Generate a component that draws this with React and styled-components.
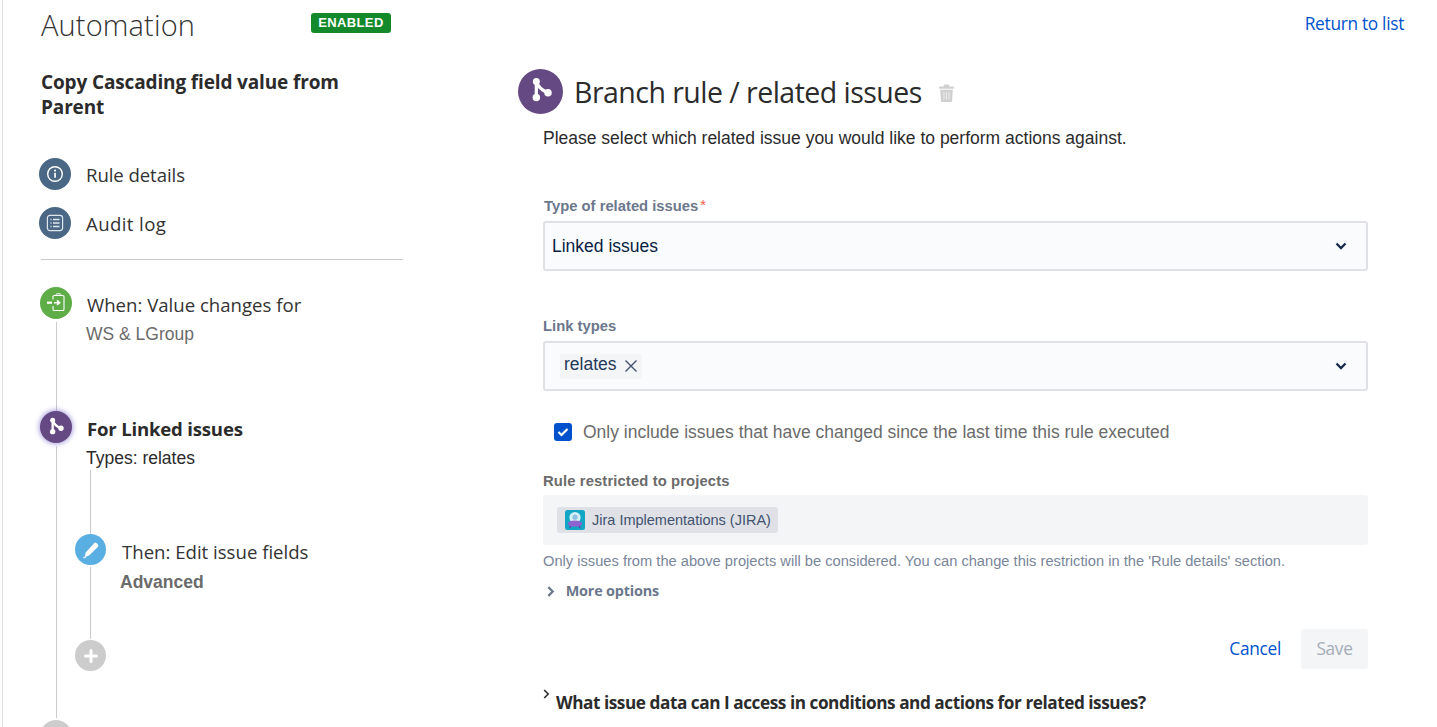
import React from "react";
import styled, { createGlobalStyle } from "styled-components";

const Global = createGlobalStyle`
  html, body { margin: 0; padding: 0; background: #fff; height: 727px; overflow: hidden; }
  * { box-sizing: border-box; }
  body { font-family: "Liberation Sans", Arial, sans-serif; color: #172b4d; }
`;
const SEGOE = `"Open Sans", "Noto Sans", sans-serif`;

const Page = styled.div`display:flex;height:727px;overflow:hidden;padding-left:2px;`;
const Sidebar = styled.aside`
  width:516px;flex:none;border-left:1px solid #dfe1e6;padding:0 0 0 38px;display:flex;flex-direction:column;
`;
const SideInner = styled.div`width:362px;display:flex;flex-direction:column;`;
const SideHead = styled.div`display:flex;justify-content:space-between;align-items:flex-start;padding-right:12px;height:62px;`;
const AppTitle = styled.h1`margin:5px 0 0;font:300 29px/40px ${SEGOE};letter-spacing:.15px;color:#333;`;
const Lozenge = styled.span`
  margin-top:13px;width:80px;height:20px;border-radius:3px;background:#14892c;color:#fff;
  font:700 13px/20px "Liberation Sans",sans-serif;text-align:center;letter-spacing:.35px;
`;
const RuleName = styled.h2`margin:8px 0 0;font:700 19px/25px ${SEGOE};letter-spacing:-.14px;color:#2b2b2b;width:330px;`;
const NavList = styled.div`display:flex;flex-direction:column;gap:17px;margin:38px 0 0 -2px;`;
const NavItem = styled.div`display:flex;align-items:center;gap:15px;height:32px;font:400 18.6px/32px ${SEGOE};letter-spacing:-.08px;color:#333;`;
const NavText = styled.span`padding-top:2px;letter-spacing:${p=>p.$ls||"-.08px"};`;
const Dot = styled.span`
  width:${p=>p.$size||32}px;height:${p=>p.$size||32}px;border-radius:50%;background:${p=>p.$bg};flex:none;
  display:flex;align-items:center;justify-content:center;
  ${p=>p.$glow?`box-shadow:0 0 5px 1px rgba(101,84,192,.55);`:""}
`;
const Divider = styled.hr`margin:20px 0 0;border:0;border-top:1px solid #c9c9cf;`;

const Timeline = styled.div`display:flex;flex-direction:column;margin:27px 0 0 -1px;`;
const Step = styled.div`display:flex;gap:${p=>p.$gap||15}px;height:${p=>p.$h}px;flex:none;`;
const Marker = styled.div`width:${p=>p.$w||32}px;flex:none;display:flex;flex-direction:column;align-items:center;`;
const Line = styled.span`flex:1;width:1px;background:#c9c9cf;margin:${p=>p.$m||"3px 0 2px"};`;
const StepBody = styled.div`flex:1;min-width:0;padding-top:${p=>p.$pt||6}px;`;
const StepTitle = styled.div`font:${p=>p.$bold?700:400} 18.6px/24px ${SEGOE};letter-spacing:${p=>p.$bold?"-.2px":"0"};color:${p=>p.$bold?"#2b2b2b":"#333"};`;
const StepSub = styled.div`
  margin:${p=>p.$m||"6px 0 0 -1px"};font:${p=>p.$bold?700:400} 17.5px/22px "Liberation Sans",sans-serif;color:${p=>p.$c||"#6b6b6b"};
`;
const Nested = styled.div`display:flex;flex-direction:column;margin:1px 0 0 -12px;`;
const NestedLead = styled.div`width:31px;display:flex;justify-content:center;height:64px;`;
const GreyLine = styled.span`width:1px;height:100%;background:#c9c9cf;`;

const Main = styled.main`flex:1;min-width:0;display:flex;flex-direction:column;padding-right:33px;position:relative;`;
const TopBar = styled.div`height:68px;display:flex;justify-content:flex-end;padding-top:12px;`;
const TextLink = styled.a`font:400 17.3px/24px ${SEGOE};letter-spacing:-.3px;color:#0052cc;`;
const HeadingRow = styled.div`display:flex;align-items:center;height:46px;`;
const HeadingTitle = styled.h2`margin:2px 0 0 11px;font:400 28.5px/40px ${SEGOE};letter-spacing:-.53px;color:#2b2b2b;`;
const Trash = styled.span`margin:3px 0 0 17px;display:flex;`;
const Form = styled.div`margin-left:25px;width:825px;display:flex;flex-direction:column;`;
const Lead = styled.p`margin:12px 0 0;font:400 17.5px/24px "Liberation Sans",sans-serif;color:#2b2b2b;`;
const FieldLabel = styled.label`
  display:block;margin:${p=>p.$m};font:700 14.8px/18px "Liberation Sans",sans-serif;letter-spacing:${p=>p.$ls||"0"};color:${p=>p.$c||"#6b778c"};
`;
const Req = styled.span`color:#ef5b4a;font-weight:400;margin-left:2px;position:relative;top:-1px;`;
const SelectBox = styled.div`
  height:50px;border:2px solid #dfe1e6;border-radius:3px;background:#fafbfc;display:flex;align-items:center;justify-content:space-between;
  padding:0 19px 0 ${p=>p.$pl||7}px;font:400 17.5px/24px "Liberation Sans",sans-serif;color:#091e42;
`;
const Chip = styled.span`
  height:25px;padding:0 4px 4px;border-radius:3px;background:#f4f5f7;display:flex;align-items:center;gap:7px;
  font:400 17.5px/22px "Liberation Sans",sans-serif;color:#253858;
`;
const CheckRow = styled.div`
  display:flex;align-items:center;gap:11px;margin:31px 0 0 11px;height:20px;font:400 17.5px/20px "Liberation Sans",sans-serif;color:#6b6b6b;
`;
const CheckBox = styled.span`width:18px;height:18px;border-radius:3px;background:#0052cc;display:flex;align-items:center;justify-content:center;`;
const ProjectBox = styled.div`height:50px;border-radius:3px;background:#f4f5f7;display:flex;align-items:center;padding-left:14px;`;
const ProjectChip = styled.span`
  height:26px;padding:0 7px 0 8px;border-radius:3px;background:#dfe1e6;display:flex;align-items:center;gap:7px;
  font:400 14.5px/20px "Liberation Sans",sans-serif;color:#42526e;
`;
const Help = styled.p`margin:8px 0 0;font:400 14.68px/17px "Liberation Sans",sans-serif;color:#7a869a;`;
const More = styled.div`
  display:flex;align-items:center;gap:11px;margin:12px 0 0 4px;font:700 14.4px/18px ${SEGOE};letter-spacing:-.17px;color:#6b778c;
`;
const Actions = styled.div`display:flex;justify-content:flex-end;align-items:center;gap:20px;margin-top:29px;`;
const SaveBtn = styled.button`
  width:67px;height:40px;border:0;border-radius:3px;background:#f4f5f7;color:#a5adba;font:400 17.3px/24px ${SEGOE};letter-spacing:-.3px;padding:0;
`;
const Faq = styled.div`display:flex;align-items:flex-start;gap:6px;margin:22px 0 0;font:700 17.2px/24px ${SEGOE};letter-spacing:-.45px;color:#2b2b2b;`;
const FaqMark = styled.span`display:flex;margin-top:-2px;`;

const BranchIcon = ({s=20}) => (
  <svg width={s} height={s} viewBox="0 0 24 24" fill="none">
    <path d="M8 3.6v14" stroke="#fff" strokeWidth="2.8"/>
    <path d="M8 3.6c1 4.2 3.5 7.4 10 9.9" stroke="#fff" strokeWidth="2.8"/>
    <circle cx="8" cy="3.8" r="3" fill="#fff"/><circle cx="8" cy="17.6" r="3.2" fill="#fff"/><circle cx="18" cy="13.5" r="3.2" fill="#fff"/>
  </svg>
);
const InfoIcon = () => (
  <svg width="18" height="18" viewBox="0 0 18 18" fill="none">
    <circle cx="9" cy="9" r="7.3" stroke="#fff" strokeWidth="1.4"/>
    <rect x="8.2" y="7.8" width="1.7" height="5" rx=".5" fill="#fff"/><circle cx="9" cy="5.6" r="1.05" fill="#fff"/>
  </svg>
);
const LogIcon = () => (
  <svg width="18" height="18" viewBox="0 0 18 18" fill="none">
    <rect x="1.4" y="1.4" width="15.2" height="15.2" rx="2.5" stroke="#dfe6ee" strokeWidth="1.2"/>
    <path d="M7 5.5h6.5M7 9h6.5M7 12.5h6.5M4.5 5.5h1M4.5 9h1M4.5 12.5h1" stroke="#dfe6ee" strokeWidth="1.3"/>
  </svg>
);
const TriggerIcon = () => (
  <svg width="20" height="20" viewBox="0 0 20 20" fill="none">
    <path d="M7 6.5V3.8A1.3 1.3 0 0 1 8.3 2.5h8.4A1.3 1.3 0 0 1 18 3.8v12.4a1.3 1.3 0 0 1-1.3 1.3H8.3A1.3 1.3 0 0 1 7 16.2V13" stroke="#fff" strokeWidth="1.1"/>
    <path d="M10.2 2.5V1.6a.8.8 0 0 1 .8-.8h3a.8.8 0 0 1 .8.8v.9z" stroke="#fff" strokeWidth="1"/>
    <path d="M1 9.7h5" stroke="#fff" strokeWidth="2.2"/>
    <path d="M8 9.7h5M11 7.4l2.6 2.3-2.6 2.3" stroke="#fff" strokeWidth="1.6"/>
  </svg>
);
const PencilIcon = () => (
  <svg width="20" height="20" viewBox="0 0 20 20">
    <path d="M13.4 2.9a1.8 1.8 0 0 1 2.5 0l1.2 1.2a1.8 1.8 0 0 1 0 2.5l-8.7 8.7-4.4 1.6 1-4.6z" fill="#fff" transform="translate(-.3 .3)"/>
    <path d="M2 17.5h3" stroke="#cfe6f6" strokeWidth="1.4"/>
  </svg>
);
const PlusIcon = () => (
  <svg width="14" height="14" viewBox="0 0 14 14"><path d="M7 1.5v11M1.5 7h11" stroke="#fff" strokeWidth="3" strokeLinecap="round"/></svg>
);
const TrashIcon = () => (
  <svg width="15" height="18" viewBox="0 0 15 18" fill="#d0d0d0">
    <rect x="0" y="2.6" width="15" height="2.2" rx=".8"/><rect x="4.7" y="0.4" width="5.6" height="2.6" rx="1"/>
    <path d="M1.2 5.8h12.6l-.7 11a1.2 1.2 0 0 1-1.2 1.2H3.1a1.2 1.2 0 0 1-1.2-1.2z"/>
    <path d="M5 8v7.5M7.5 8v7.5M10 8v7.5" stroke="#ececec" strokeWidth="1"/>
  </svg>
);
const ChevronDown = () => (
  <svg width="12" height="8" viewBox="0 0 12 8" fill="none"><path d="M1.5 1.5L6 6l4.5-4.5" stroke="#172b4d" strokeWidth="2.3"/></svg>
);
const CloseX = () => (
  <svg width="14" height="14" viewBox="0 0 14 14" fill="none" style={{marginTop:3}}><path d="M1.5 1.5l11 11M12.5 1.5l-11 11" stroke="#42526e" strokeWidth="1.4"/></svg>
);
const Check = () => (
  <svg width="12" height="10" viewBox="0 0 12 10" fill="none"><path d="M1.5 5l3 3 6-6" stroke="#fff" strokeWidth="2.2"/></svg>
);
const ChevronRight = ({c="#6b778c", w=2, h=11}) => (
  <svg width={h*.7} height={h} viewBox="0 0 7 10" fill="none"><path d="M1.2 1L5.2 5l-4 4" stroke={c} strokeWidth={w}/></svg>
);
const ProjectAvatar = () => (
  <svg width="20" height="20" viewBox="0 0 20 20">
    <rect width="20" height="20" rx="2.5" fill="#12a5c4"/>
    <circle cx="10" cy="7.5" r="5.6" fill="#d4f0f7"/><circle cx="10" cy="7.2" r="2.6" fill="#8fbfe0"/>
    <ellipse cx="10" cy="13.6" rx="7.2" ry="3" fill="#8e63cf"/>
    <rect x="4.5" y="16" width="1.6" height="2" fill="#6a45ad"/><rect x="13.9" y="16" width="1.6" height="2" fill="#6a45ad"/>
  </svg>
);

export default function App() {
  return (
    <>
      <Global />
      <Page>
        <Sidebar>
          <SideInner>
            <SideHead>
              <AppTitle>Automation</AppTitle>
              <Lozenge>ENABLED</Lozenge>
            </SideHead>
            <RuleName>Copy Cascading field value from Parent</RuleName>
            <NavList>
              <NavItem><Dot $bg="#4a6785"><InfoIcon /></Dot><NavText>Rule details</NavText></NavItem>
              <NavItem><Dot $bg="#4a6785"><LogIcon /></Dot><NavText $ls=".4px">Audit log</NavText></NavItem>
            </NavList>
            <Divider />
            <Timeline>
              <Step $h={124}>
                <Marker><Dot $bg="#5ead46"><TriggerIcon /></Dot><Line $m="3px 0 0" /></Marker>
                <StepBody>
                  <StepTitle>When: Value changes for</StepTitle>
                  <StepSub $c="#6b6b6b">WS &amp; LGroup</StepSub>
                </StepBody>
              </Step>
              <Step $h={309}>
                <Marker><Dot $bg="#654982" $glow><BranchIcon s={20} /></Dot><Line $m="3px 0 2px" /></Marker>
                <StepBody>
                  <StepTitle $bold>For Linked issues</StepTitle>
                  <StepSub $c="#2b2b2b">Types: relates</StepSub>
                  <Nested>
                    <NestedLead><GreyLine /></NestedLead>
                    <Step $h={106} $gap={16}>
                      <Marker $w={31}><Dot $bg="#59afe1" $size={31}><PencilIcon /></Dot><Line $m="2px 0 1px" /></Marker>
                      <StepBody>
                        <StepTitle>Then: Edit issue fields</StepTitle>
                        <StepSub $bold $c="#6b6b6b" $m="7px 0 0 -2px">Advanced</StepSub>
                      </StepBody>
                    </Step>
                    <Step $h={32}>
                      <Marker $w={31}><Dot $bg="#ccc" $size={31}><PlusIcon /></Dot></Marker>
                    </Step>
                  </Nested>
                </StepBody>
              </Step>
              <Step $h={32}><Marker><Dot $bg="#ccc" /></Marker></Step>
            </Timeline>
          </SideInner>
        </Sidebar>
        <Main>
          <TopBar><TextLink>Return to list</TextLink></TopBar>
          <HeadingRow>
            <Dot $bg="#654982" $size={45}><BranchIcon s={28} /></Dot>
            <HeadingTitle>Branch rule / related issues</HeadingTitle>
            <Trash><TrashIcon /></Trash>
          </HeadingRow>
          <Form>
            <Lead>Please select which related issue you would like to perform actions against.</Lead>
            <FieldLabel $m="47px 0 6px 1px">Type of related issues<Req>*</Req></FieldLabel>
            <SelectBox>Linked issues<ChevronDown /></SelectBox>
            <FieldLabel $m="46px 0 6px">Link types</FieldLabel>
            <SelectBox $pl={15}><Chip>relates <CloseX /></Chip><ChevronDown /></SelectBox>
            <CheckRow><CheckBox><Check /></CheckBox>Only include issues that have changed since the last time this rule executed</CheckRow>
            <FieldLabel $m="30px 0 5px" $c="#6b6b6b" $ls=".12px">Rule restricted to projects</FieldLabel>
            <ProjectBox><ProjectChip><ProjectAvatar />Jira Implementations (JIRA)</ProjectChip></ProjectBox>
            <Help>Only issues from the above projects will be considered. You can change this restriction in the 'Rule details' section.</Help>
            <More><ChevronRight />More options</More>
            <Actions><TextLink>Cancel</TextLink><SaveBtn>Save</SaveBtn></Actions>
            <Faq><FaqMark><ChevronRight c="#2b2b2b" w={1.6} h={10} /></FaqMark>What issue data can I access in conditions and actions for related issues?</Faq>
          </Form>
        </Main>
      </Page>
    </>
  );
}
